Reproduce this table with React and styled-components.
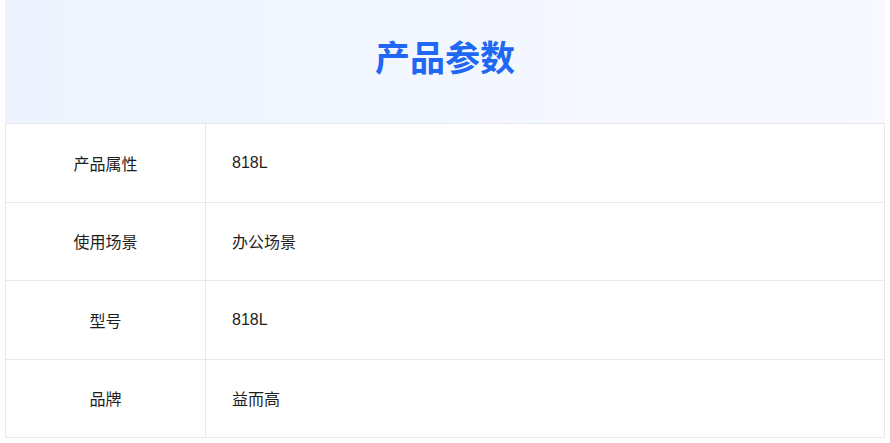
import React from 'react';
import styled, { createGlobalStyle } from 'styled-components';

const params = [
  { label: '产品属性', value: '818L' },
  { label: '使用场景', value: '办公场景' },
  { label: '型号', value: '818L' },
  { label: '品牌', value: '益而高' },
];

const GlobalStyle = createGlobalStyle`
  body {
    margin: 0;
    background: #fff;
    font-family: "Liberation Sans", "Noto Sans CJK SC", sans-serif;
  }
`;

const Wrapper = styled.div`
  width: 880px;
  margin: 0 auto;
`;

const Header = styled.div`
  height: 123px;
  display: flex;
  align-items: center;
  justify-content: center;
  background: linear-gradient(90deg, #edf4ff, #f8f9ff);
`;

const Title = styled.h2`
  margin: 0;
  font-size: 35px;
  font-weight: 700;
  color: #2068f3;
  font-family: "Noto Sans CJK SC", sans-serif;
  padding-bottom: 12px;
`;

const Table = styled.div`
  border-top: 1px solid #e8e8e8;
  border-left: 1px solid #e8e8e8;
`;

const Row = styled.div`
  box-sizing: border-box;
  display: grid;
  grid-template-columns: 200px 1fr;
  height: 78.5px;
  border-bottom: 1px solid #e8e8e8;
`;

const Cell = styled.div`
  display: flex;
  align-items: center;
  justify-content: ${(p) => (p.$label ? 'center' : 'flex-start')};
  padding-left: ${(p) => (p.$label ? '0' : '26px')};
  border-right: 1px solid #e8e8e8;
  font-size: 16px;
  color: #1e1e1e;
`;

const App = () => (
  <Wrapper>
    <GlobalStyle />
    <Header>
      <Title>产品参数</Title>
    </Header>
    <Table>
      {params.map((p) => (
        <Row key={p.label}>
          <Cell $label>{p.label}</Cell>
          <Cell>{p.value}</Cell>
        </Row>
      ))}
    </Table>
  </Wrapper>
);

export default App;
